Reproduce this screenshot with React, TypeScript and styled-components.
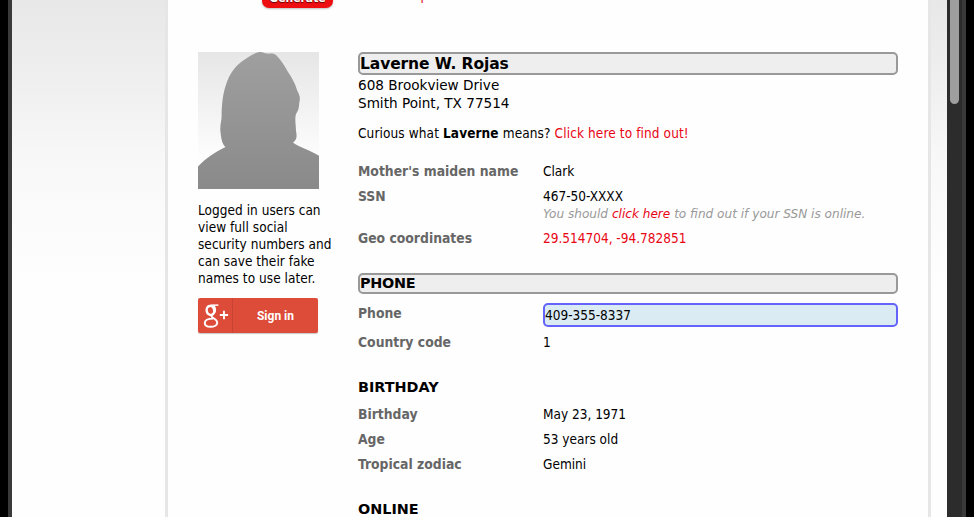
import React from "react";
import styled, { createGlobalStyle, css } from "styled-components";

const GlobalStyle = createGlobalStyle`
  html, body { margin: 0; padding: 0; overflow: hidden; background: #000; }
  *, *::before, *::after { box-sizing: border-box; }
`;

const Desktop = styled.div`
  display: flex;
  width: 974px;
  height: 517px;
  padding: 0 8px;
  overflow: hidden;
  background: #000;
  color: #000;
  font: 13.5px/17px "DejaVu Sans Condensed", "DejaVu Sans", Tahoma, sans-serif;
`;

const WindowFrame = styled.div`
  display: flex;
  width: 958px;
  border: solid #3a3a3a;
  border-width: 0 4px;
`;

const PageBackdrop = styled.div`
  flex: 1;
  display: flex;
  padding: 0 16px 0 153px;
  background: linear-gradient(#e8e8e8 0, #ededed 60px, #f2f2f2 110px, #f8f8f8 160px, #fbfbfb 220px, #fefefe 290px);
`;

const Sheet = styled.main`
  flex: 1;
  padding: 0 30px;
  border: solid #e6e6e6;
  border-width: 0 3px;
  background: #fefefe;
`;

const ScrollTrack = styled.div`
  width: 15px;
  padding-left: 3px;
  background: #2c2c2c;
`;

const ScrollThumb = styled.div`
  width: 9px;
  height: 104px;
  border-radius: 0 0 5px 5px;
  background: #9e9e9e;
`;

const GeneratorBar = styled.header`
  display: flex;
  align-items: flex-start;
  height: 52px;
  padding-left: 64px;
`;

const GenerateButton = styled.button`
  display: flex;
  align-items: flex-end;
  justify-content: center;
  width: 71px;
  height: 27px;
  margin-top: -19px;
  padding: 0 0 3px;
  border: 0;
  border-radius: 7px;
  background: #ee0e12;
  box-shadow: 0 1px 2px rgba(0, 0, 0, 0.25);
  color: #fff;
  font: bold 12px/14px "DejaVu Sans Condensed", sans-serif;
  text-shadow: 0 1px 1px #600;
`;

const OptionsLink = styled.a`
  margin: -13px 0 0 14px;
  color: #e00510;
  line-height: 17px;
`;

const Columns = styled.div`
  display: grid;
  grid-template-columns: 136px 540px;
  column-gap: 24px;
`;

const Sidebar = styled.aside`
  display: flex;
  flex-direction: column;
  align-items: flex-start;
`;

const Portrait = styled.svg`
  display: block;
  width: 121px;
  height: 137px;
`;

const LoginNote = styled.p`
  margin: 13px 0 11px;
  line-height: 17px;
  letter-spacing: 0.04px;
  white-space: nowrap;
`;

const SignInButton = styled.button`
  display: flex;
  width: 120px;
  height: 35px;
  padding: 0;
  border: 0;
  border-radius: 2px;
  background: #dd4b39;
  box-shadow: 0 1px 1px rgba(0, 0, 0, 0.22);
  color: #fff;
  font: 700 12px/35px Roboto, sans-serif;
`;

const GoogleMark = styled.svg`
  width: 35px;
  height: 35px;
  border-right: 1px solid #c94434;
`;

const SignInLabel = styled.span`
  flex: 1;
  padding-top: 1px;
  text-align: center;
`;

const Identity = styled.section`
  display: flex;
  flex-direction: column;
`;

const headingBox = css`
  border: 2px solid #999;
  border-radius: 5px;
  background: #eee;
`;

const NameHeading = styled.h3`
  ${headingBox}
  height: 23px;
  margin: 0 0 1px;
  font-family: "DejaVu Sans", Verdana, sans-serif;
  font-size: 15.5px;
  line-height: 20px;
  letter-spacing: -0.1px;
`;

const Address = styled.address`
  font-family: "DejaVu Sans", Verdana, sans-serif;
  font-style: normal;
  font-size: 13.6px;
  line-height: 18px;
`;

const NameMeaning = styled.p`
  margin: 12px 0 21px;
  line-height: 18px;
  letter-spacing: 0.11px;
`;

const Link = styled.a`
  color: #e90514;
`;

const SectionHeading = styled.h3<{ $boxed?: boolean }>`
  height: 21px;
  margin: 0;
  font-family: "DejaVu Sans", Verdana, sans-serif;
  font-size: 14.4px;
  line-height: 21px;
  ${(p) => p.$boxed && css`
    ${headingBox}
    line-height: 17px;
    letter-spacing: -0.3px;
  `}
`;

const Facts = styled.dl<{ $tight?: boolean }>`
  display: flex;
  flex-direction: column;
  gap: 8px;
  margin: ${(p) => (p.$tight ? "8px 0 26px" : "0 0 26px")};
`;

const Fact = styled.div`
  display: grid;
  grid-template-columns: 185px 1fr;
`;

const Term = styled.dt`
  color: #666;
  font-size: 13.8px;
  font-weight: bold;
`;

const Detail = styled.dd`
  margin: 0;
`;

const Hint = styled.div`
  margin-top: 2px;
  color: #999;
  font: italic 12.1px/15px "DejaVu Sans", sans-serif;
  white-space: nowrap;
`;

const PhoneFacts = styled(Facts)`
  gap: 7px;
  margin: 9px 0 26px;
`;

const PhoneTerm = styled(Term)`
  padding-top: 2px;
`;

const PhoneValue = styled(Detail)`
  height: 24px;
  border: 2px solid #6464fa;
  border-radius: 5px;
  background: #daebf3;
  line-height: 20px;
`;

const birthday = [
  ["Birthday", "May 23, 1971"],
  ["Age", "53 years old"],
  ["Tropical zodiac", "Gemini"],
];

export default function App() {
  return (
    <Desktop>
      <GlobalStyle />
      <WindowFrame>
        <PageBackdrop>
          <Sheet>
            <GeneratorBar>
              <GenerateButton>Generate</GenerateButton>
              <OptionsLink>Advanced Options</OptionsLink>
            </GeneratorBar>
            <Columns>
              <Sidebar>
                <Portrait viewBox="0 0 121 137">
                  <defs>
                    <linearGradient id="backdrop" x1="0" y1="0" x2="0" y2="1">
                      <stop stopColor="#e6e6e6" />
                      <stop offset=".8" stopColor="#fefefe" />
                    </linearGradient>
                    <linearGradient id="figure" x1="0" y1="0" x2="0" y2="1">
                      <stop stopColor="#9f9f9f" />
                      <stop offset="1" stopColor="#8a8a8a" />
                    </linearGradient>
                  </defs>
                  <path fill="url(#backdrop)" d="M0 0h121v137H0z" />
                  <path
                    fill="url(#figure)"
                    d="M0 137V114.500C8 106 17 100 27.500 95C24 92 23 86 22.300 78C22 72 24 68 23.600 62C24 48 25.500 37 31 25C35 17 40 12 46 8C53 3 58 0 63 0C65 0 66 1.500 69 1.500C72 2 75 .8 78 3C83 8 86 13 90 20C94 26 97 31 99 38C102 44 102.500 46 101.200 51C101 57 100 59 98 62C96.500 67 98 73 98 79C99.500 86 98 88 95 90.500C101 95 112 98 121 103.800V137z"
                  />
                </Portrait>
                <LoginNote>
                  Logged in users can<br />view full social<br />security numbers and<br />can save their fake<br />names to use later.
                </LoginNote>
                <SignInButton>
                  <GoogleMark viewBox="0 0 35 35" fill="none" stroke="#fff">
                    <ellipse cx="12.800" cy="12.300" rx="3.900" ry="4.700" strokeWidth="2.500" transform="rotate(-12 12.800 12.300)" />
                    <path d="M21 6.800H13" strokeWidth="1.500" />
                    <path d="M15.500 7.300C18 9 18.600 13 16 15.500C13.500 17.500 13.300 18.500 15.500 20C18 21.600 20.200 22.500 19.800 25.300C19.200 28.300 16 29.100 12.700 29.100C9 29.100 6.700 27.500 7 25C7.300 22 11 20.700 15.500 20.700" strokeWidth="2" />
                    <path d="M22.500 17H31M26.750 12.700V21.300" strokeWidth="1.900" />
                  </GoogleMark>
                  <SignInLabel>Sign in</SignInLabel>
                </SignInButton>
              </Sidebar>
              <Identity>
                <NameHeading>Laverne W. Rojas</NameHeading>
                <Address>
                  608 Brookview Drive<br />Smith Point, TX 77514
                </Address>
                <NameMeaning>
                  Curious what <b>Laverne</b> means? <Link>Click here to find out!</Link>
                </NameMeaning>
                <Facts>
                  <Fact>
                    <Term>Mother's maiden name</Term>
                    <Detail>Clark</Detail>
                  </Fact>
                  <Fact>
                    <Term>SSN</Term>
                    <Detail>
                      467-50-XXXX
                      <Hint>
                        You should <Link>click here</Link> to find out if your SSN is online.
                      </Hint>
                    </Detail>
                  </Fact>
                  <Fact>
                    <Term>Geo coordinates</Term>
                    <Detail><Link>29.514704, -94.782851</Link></Detail>
                  </Fact>
                </Facts>
                <SectionHeading $boxed>PHONE</SectionHeading>
                <PhoneFacts>
                  <Fact>
                    <PhoneTerm>Phone</PhoneTerm>
                    <PhoneValue>409-355-8337</PhoneValue>
                  </Fact>
                  <Fact>
                    <Term>Country code</Term>
                    <Detail>1</Detail>
                  </Fact>
                </PhoneFacts>
                <SectionHeading>BIRTHDAY</SectionHeading>
                <Facts $tight>
                  {birthday.map(([term, value]) => (
                    <Fact key={term}>
                      <Term>{term}</Term>
                      <Detail>{value}</Detail>
                    </Fact>
                  ))}
                </Facts>
                <SectionHeading>ONLINE</SectionHeading>
              </Identity>
            </Columns>
          </Sheet>
        </PageBackdrop>
        <ScrollTrack>
          <ScrollThumb />
        </ScrollTrack>
      </WindowFrame>
    </Desktop>
  );
}
